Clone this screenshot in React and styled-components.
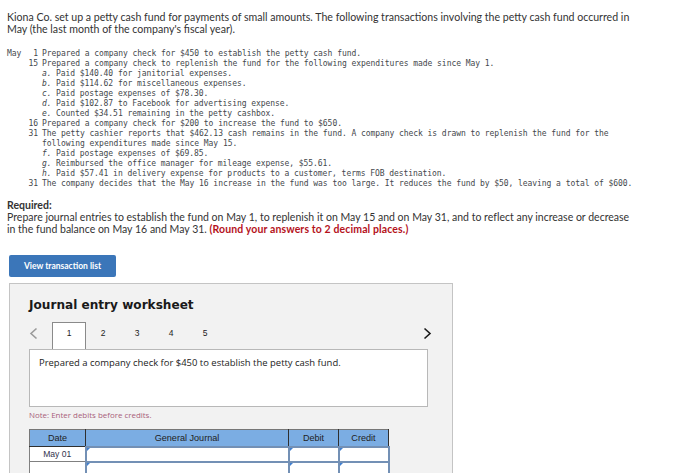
import styled, { createGlobalStyle } from "styled-components";

const GlobalStyle = createGlobalStyle`
  html, body {
    margin: 0;
    padding: 0;
    background: #fff;
  }
  body {
    width: 675px;
    height: 473px;
    overflow: hidden;
  }
`;

const transactions = [
  { month: "May", day: "1", text: "Prepared a company check for $450 to establish the petty cash fund." },
  { day: "15", text: "Prepared a company check to replenish the fund for the following expenditures made since May 1." },
  { label: "a.", text: "Paid $140.40 for janitorial expenses." },
  { label: "b.", text: "Paid $114.62 for miscellaneous expenses." },
  { label: "c.", text: "Paid postage expenses of $78.30." },
  { label: "d.", text: "Paid $102.87 to Facebook for advertising expense." },
  { label: "e.", text: "Counted $34.51 remaining in the petty cashbox." },
  { day: "16", text: "Prepared a company check for $200 to increase the fund to $650." },
  { day: "31", text: "The petty cashier reports that $462.13 cash remains in the fund. A company check is drawn to replenish the fund for the" },
  { text: "following expenditures made since May 15." },
  { label: "f.", text: "Paid postage expenses of $69.85." },
  { label: "g.", text: "Reimbursed the office manager for mileage expense, $55.61." },
  { label: "h.", text: "Paid $57.41 in delivery expense for products to a customer, terms FOB destination." },
  { day: "31", text: "The company decides that the May 16 increase in the fund was too large. It reduces the fund by $50, leaving a total of $600." },
];

const tabs = ["1", "2", "3", "4", "5"];
const journalRows = ["May 01", ""];

const App = () => {
  return (
    <Page>
      <GlobalStyle />
      <Intro>
        Kiona Co. set up a petty cash fund for payments of small amounts. The following transactions involving the petty cash fund occurred in
        <br />
        May (the last month of the company's fiscal year).
      </Intro>
      <Ledger>
        {transactions.map((row, i) => (
          <LedgerRow key={i}>
            <span>{row.month}</span>
            <Day>{row.day}</Day>
            <LedgerText>
              {row.label && <Letter>{row.label}</Letter>}
              {row.text}
            </LedgerText>
          </LedgerRow>
        ))}
      </Ledger>
      <Required>Required:</Required>
      <Prompt>
        Prepare journal entries to establish the fund on May 1, to replenish it on May 15 and on May 31, and to reflect any increase or decrease
        <br />
        in the fund balance on May 16 and May 31. <Red>(Round your answers to 2 decimal places.)</Red>
      </Prompt>
      <ViewButton>View transaction list</ViewButton>
      <Worksheet>
        <Title>Journal entry worksheet</Title>
        <TabBar>
          <Arrow>
            <svg width="9" height="13" viewBox="0 0 9 13">
              <path d="M7.5 1.5 L2 6.5 L7.5 11.5" fill="none" stroke="#9a9a9a" strokeWidth="1.6" />
            </svg>
          </Arrow>
          {tabs.map((t, i) => (
            <Tab key={t} $active={i === 0}>{t}</Tab>
          ))}
          <NextArrow>
            <svg width="9" height="13" viewBox="0 0 9 13">
              <path d="M1.5 1.5 L7 6.5 L1.5 11.5" fill="none" stroke="#1a1a1a" strokeWidth="1.6" />
            </svg>
          </NextArrow>
        </TabBar>
        <Description>Prepared a company check for $450 to establish the petty cash fund.</Description>
        <Note>Note: Enter debits before credits.</Note>
        <Table>
          <thead>
            <tr>
              <Head $w={56}>Date</Head>
              <Head $w={203}>General Journal</Head>
              <Head $w={50}>Debit</Head>
              <Head $w={50}>Credit</Head>
            </tr>
          </thead>
          <tbody>
            {journalRows.map((date, i) => (
              <tr key={i}>
                <DateCell>{date}</DateCell>
                <InputCell />
                <InputCell />
                <InputCell />
              </tr>
            ))}
          </tbody>
        </Table>
      </Worksheet>
    </Page>
  );
};

export default App;

// styled-components
const Page = styled.div`
  width: 675px;
  height: 473px;
  overflow: hidden;
  padding: 11px 0 0 7px;
  box-sizing: border-box;
  font-family: "Lato", "Liberation Sans", sans-serif;
  color: #333;
`;
const Intro = styled.p`
  margin: 0 0 14px 0;
  font-size: 10.6px;
  line-height: 12px;
  white-space: nowrap;
`;
const Ledger = styled.div`
  font-family: "DejaVu Sans Mono", monospace;
  font-size: 8px;
  line-height: 10px;
  letter-spacing: -0.056px;
  color: #44484c;
`;
const LedgerRow = styled.div`
  display: grid;
  grid-template-columns: 21px 10px 1fr;
  height: 10px;
  white-space: nowrap;
`;
const Day = styled.span`
  text-align: right;
`;
const LedgerText = styled.span`
  padding-left: 4px;
`;
const Letter = styled.i`
  display: inline-block;
  width: 14px;
`;
const Required = styled.div`
  margin-top: 10px;
  font-size: 10.5px;
  line-height: 12px;
  font-weight: 700;
`;
const Prompt = styled.p`
  margin: 0;
  font-size: 10.5px;
  line-height: 12px;
  letter-spacing: 0.01px;
  white-space: nowrap;
`;
const Red = styled.b`
  color: #b5121b;
  font-weight: 700;
  letter-spacing: 0.12px;
`;
const ViewButton = styled.button`
  display: block;
  width: 107px;
  height: 22px;
  margin: 20px 0 0 2px;
  padding: 0;
  border: 0;
  border-radius: 2px;
  background: #3b76b9;
  color: #fff;
  font-family: "Lato", "Liberation Sans", sans-serif;
  font-size: 8.5px;
  font-weight: 700;
`;
const Worksheet = styled.div`
  width: 444px;
  height: 240px;
  margin: 6px 0 0 2px;
  padding: 14px 24px 0 19px;
  box-sizing: border-box;
  border: 1px solid #c4c4c4;
  background: #f2f2f2;
`;
const Title = styled.h2`
  margin: 0;
  font-family: "DejaVu Sans", sans-serif;
  font-size: 12.1px;
  line-height: 14px;
  font-weight: 700;
  color: #1a1a1a;
`;
const TabBar = styled.div`
  display: flex;
  align-items: stretch;
  height: 27px;
  margin-top: 10px;
  font-family: "Liberation Sans", sans-serif;
  font-size: 8.5px;
  color: #222;
`;
const Arrow = styled.span`
  display: flex;
  align-items: center;
  width: 23px;
  padding-bottom: 4px;
  box-sizing: border-box;
`;
const NextArrow = styled(Arrow)`
  width: 9px;
  margin-left: auto;
  margin-right: -4px;
`;
const Tab = styled.span`
  display: flex;
  align-items: center;
  justify-content: center;
  width: 34px;
  padding-bottom: 6px;
  box-sizing: border-box;
  ${props => props.$active && `
    background: #fff;
    border: 1px solid #8a8a8a;
    border-bottom: 0;
  `}
`;
const Description = styled.div`
  height: 58px;
  padding: 7px 9px;
  box-sizing: border-box;
  border: 1px solid #b8b8b8;
  background: #fff;
  font-family: "Open Sans", sans-serif;
  font-size: 9.46px;
  line-height: 12px;
  color: #222;
`;
const Note = styled.div`
  margin-top: 4px;
  font-family: "Open Sans", sans-serif;
  font-size: 7.95px;
  line-height: 9px;
  color: #a8607a;
`;
const Table = styled.table`
  width: 360px;
  margin-top: 9px;
  border-collapse: collapse;
  table-layout: fixed;
  font-family: "Liberation Sans", sans-serif;
  font-size: 9.1px;
`;
const Head = styled.th`
  width: ${props => props.$w}px;
  height: 17px;
  padding: 0;
  box-sizing: border-box;
  background: #7badE3;
  border: 1px solid #2f2f2f;
  border-top-color: #777;
  border-left-color: #777;
  font-weight: 400;
  color: #222;
`;
const DateCell = styled.td`
  height: 15px;
  padding: 0;
  box-sizing: border-box;
  background: #fff;
  border: 1px solid #808080;
  text-align: center;
  font-size: 8.6px;
  color: #33334d;
`;
const InputCell = styled.td`
  position: relative;
  padding: 0;
  background: #fff;
  border: 2px solid #7390b5;
  &::before {
    content: "";
    position: absolute;
    top: 0;
    left: 0;
    border-top: 3px solid #3f7fd0;
    border-right: 3px solid transparent;
  }
`;
